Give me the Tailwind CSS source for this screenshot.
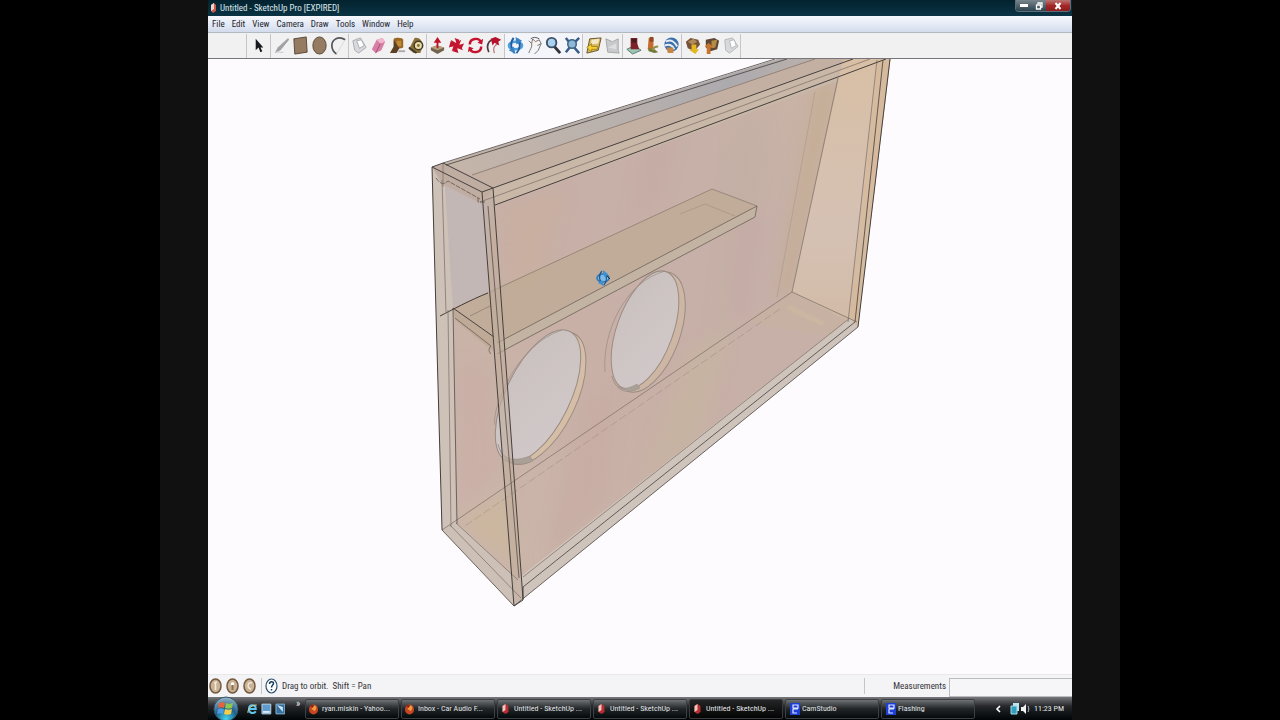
<!DOCTYPE html>
<html lang="en">
<head>
    <meta charset="UTF-8">
    <meta name="viewport" content="width=device-width, initial-scale=1.0">
    <title>Untitled - SketchUp Pro [EXPIRED]</title>
    <script src="https://cdn.jsdelivr.net/npm/@tailwindcss/browser@4"></script>
</head>
<body class="bg-black h-screen overflow-hidden flex justify-center font-['Roboto_Condensed','Roboto',sans-serif]">
    <div class="w-3/4 bg-[#111111] flex justify-center">
        <div class="w-[90%] flex flex-col bg-[#fdfbfd]">

            <!-- Title bar -->
            <header class="h-4 shrink-0 flex items-center bg-linear-to-b from-[#03222f] to-[#0b3444] pl-px pr-px text-[9px] leading-4 text-[#dfe8ec]">
                <svg class="w-2 h-3 mr-[3px]" viewBox="0 0 8 12"><path d="M2 3 5 1l2 2v6l-3 2-2-2z" fill="#c65a50"/><path d="M2 3 5 1v6L2 9z" fill="#f1d3c8"/></svg>
                <h1 class="grow">Untitled - SketchUp Pro [EXPIRED]</h1>
                <div class="flex self-start h-3 rounded-b-sm overflow-hidden border border-t-0 border-[#5f6e76]">
                    <button aria-label="Minimize" class="w-4 bg-linear-to-b from-[#7b878d] to-[#2c4450] flex items-center justify-center"><span class="w-2 h-[3px] bg-white"></span></button>
                    <button aria-label="Restore" class="w-[14px] bg-linear-to-b from-[#7b878d] to-[#2c4450] flex items-center justify-center">
                        <svg class="w-2 h-2" viewBox="0 0 8 8" fill="none" stroke="#fff" stroke-width="1.3"><path d="M3 2V1h4v4H6"/><path d="M1.500 3h4v4h-4z"/></svg>
                    </button>
                    <button aria-label="Close" class="w-6 bg-linear-to-b from-[#b97272] via-[#a42828] to-[#8c1c1c] flex items-center justify-center">
                        <svg class="w-2 h-2" viewBox="0 0 8 8" stroke="#fff" stroke-width="2"><path d="M1.500 1l5 6M6.500 1l-5 6"/></svg>
                    </button>
                </div>
            </header>

            <!-- Menu -->
            <nav class="h-[17px] shrink-0 flex items-center gap-[7px] px-1 bg-linear-to-b from-[#f7f9fe] to-[#d3dced] border-b border-[#b4b8c0] text-[9px] leading-4 text-[#22242c]">
                <button>File</button>
                <button>Edit</button>
                <button>View</button>
                <button>Camera</button>
                <button>Draw</button>
                <button>Tools</button>
                <button>Window</button>
                <button>Help</button>
            </nav>

            <!-- Toolbar -->
            <div class="h-[26px] shrink-0 flex items-center pl-[38px] bg-[#f2f1f2] border-b border-[#77777b]">
                <div class="flex border-l border-[#c6c6ca] pl-[3px] pr-px h-6 items-center">
                    <button aria-label="Select"><svg class="size-[19px]" viewBox="0 0 20 20"><path d="M6 3v12l3-3 2 5 2-1-2-4h3z" fill="#16181c"/></svg></button>
                </div>
                <div class="flex border-l border-[#c6c6ca] pl-px h-6 items-center">
                    <button aria-label="Line"><svg class="size-[19px]" viewBox="0 0 20 20"><path d="M17 2 6 12l-3 6 6-3L18 4z" fill="#a0a2a5"/><path d="M4 17c3-1 5 1 8 0" stroke="#c4c4c6" fill="none"/></svg></button>
                    <button aria-label="Rectangle"><svg class="size-[19px]" viewBox="0 0 20 20"><path d="M3 3 16 1l1 16-13 2z" fill="#957b61" stroke="#594637"/></svg></button>
                    <button aria-label="Circle"><svg class="size-[19px]" viewBox="0 0 20 20"><ellipse cx="10" cy="10" rx="7" ry="9" fill="#957b61" stroke="#594637"/></svg></button>
                    <button aria-label="Arc"><svg class="size-[19px]" viewBox="0 0 20 20" fill="none"><path d="M17 4C10-1 3 4 3 10c0 4 2 7 5 9" stroke="#55575b" stroke-width="1.800"/><path d="m17 4-9 15" stroke="#d4d4d6" stroke-width=".8"/></svg></button>
                </div>
                <div class="flex border-l border-[#c6c6ca] pl-px h-6 items-center">
                    <button aria-label="Make Component"><svg class="size-[19px]" viewBox="0 0 20 20" stroke="#a9abb0"><path d="m3 5 8-3 6 10-8 6-4-3z" fill="#d8d9dc"/><path d="m7 5 5-1 3 6-5 3z" fill="#fff"/></svg></button>
                    <button aria-label="Eraser"><svg class="size-[19px]" viewBox="0 0 20 20"><path d="m8 4 6-2 3 4-4 9-6 3-4-4z" fill="#d77ea5"/><path d="m8 4 4 4 5-2-3-4z" fill="#f1b7ce"/><path d="m12 8-5 10" stroke="#a94b73"/></svg></button>
                    <button aria-label="Paint Bucket"><svg class="size-[19px]" viewBox="0 0 20 20"><path d="M6 3c3-2 10-1 10 1v8c-3 2-8 1-10-1z" fill="#9a6723"/><path d="M9 5h5v6H9z" fill="#c08a35"/><path d="M6 4v7l-4 7h7l3-5" fill="#5b4024"/><path d="M11 15h7v2h-7z" fill="#aaa"/></svg></button>
                    <button aria-label="Tape Measure"><svg class="size-[19px]" viewBox="0 0 20 20"><path d="M8 2c5-1 8 3 9 8l-3 8H7L2 14z" fill="#8b7038"/><circle cx="12" cy="10" r="4.500" fill="#e8dca7" stroke="#453c27" stroke-width="1.600"/><path d="M2 12l8 6" stroke="#3f3a2c" stroke-width="2"/><circle cx="12" cy="10" r="1.500" fill="#8b7038"/></svg></button>
                </div>
                <div class="flex border-l border-[#c6c6ca] pl-px h-6 items-center">
                    <button aria-label="Push/Pull"><svg class="size-[19px]" viewBox="0 0 20 20"><path d="m3 12 6-2 8 2v3l-7 4-7-4z" fill="#72634f"/><path d="m3 12 6-2 8 2-7 3z" fill="#b7a17d"/><path d="m10 1 4 6h-3v6H9V7H6z" fill="#c0122c"/></svg></button>
                    <button aria-label="Move"><svg class="size-[19px]" viewBox="0 0 20 20" fill="#c5142d"><path d="m8 2 5 2-2 6zM18 8l-3 6-5-4zM12 18l-6-2 4-6zM2 12l2-7 6 5z"/><path d="m4 4 5 3 6-3-2 5 4 6-6-2-6 3 2-6z"/></svg></button>
                    <button aria-label="Rotate"><svg class="size-[19px]" viewBox="0 0 20 20" fill="none" stroke="#c5142d" stroke-width="2.600"><path d="M4 9c0-7 10-8 12-2M16 11c0 7-10 8-12 2"/><path d="m18 3-1 6-5-2zM2 17l1-6 5 2z" fill="#c5142d" stroke="none"/></svg></button>
                    <button aria-label="Offset"><svg class="size-[19px]" viewBox="0 0 20 20" fill="none"><path d="M4 17C0 8 6 1 14 4" stroke="#4b3a3e" stroke-width="1.800"/><path d="M10 18c-2-4-1-8 4-10" stroke="#b9808a" stroke-width="1.400"/><path d="m6 3 5-2 6 3-3 2 1 4-5-3-2 3z" fill="#b8112b"/></svg></button>
                </div>
                <div class="flex border-l border-[#c6c6ca] pl-px h-6 items-center bg-[#f3f5fa]">
                    <button aria-label="Orbit"><svg class="size-[19px]" viewBox="0 0 20 20" fill="none"><ellipse cx="10" cy="10" rx="7" ry="4" stroke="#4d9fdd" stroke-width="2.600"/><path d="M8 2c-4 5-3 12 1 16M12 3c4 4 3 11-1 15" stroke="#215d9d" stroke-width="2"/><path d="m10 1 7 4-6 4z" fill="#3684c6"/><path d="m10 19-7-4 5-4z" fill="#3684c6"/></svg></button>
                    <button aria-label="Pan"><svg class="size-[19px]" viewBox="0 0 20 20" fill="none" stroke="#77716e"><path d="M4 18c1-4 4-6 3-10L4 5M7 8l1-5 3 3 4-2 2 4-4 2M17 8l-3 7-4 4" fill="#f7f3ef"/><path d="M6 3c2-2 6-2 9 0" stroke="#555"/></svg></button>
                    <button aria-label="Zoom"><svg class="size-[19px]" viewBox="0 0 20 20"><path d="m10 10 7 8" stroke="#303237" stroke-width="3"/><circle cx="8" cy="7" r="5" fill="#a8d2ef" stroke="#3d5267" stroke-width="2"/></svg></button>
                    <button aria-label="Zoom Extents"><svg class="size-[19px]" viewBox="0 0 20 20"><path d="m3 2 4 5M17 2l-5 5M3 17l4-5M10 10l7 8" stroke="#385d88" stroke-width="2.600"/><circle cx="9.500" cy="8.500" r="4.500" fill="#8fb8d6" stroke="#3d6487" stroke-width="1.600"/></svg></button>
                </div>
                <div class="flex border-l border-[#c6c6ca] pl-px h-6 items-center">
                    <button aria-label="Previous View"><svg class="size-[19px]" viewBox="0 0 20 20"><path d="m6 3 12-1-3 13-12 3z" fill="#d9b95c" stroke="#66532c"/><path d="m8 4 8-1-1 5-8 1z" fill="#f2e8c8"/><path d="m3 12 5-4v3h6v3H8v3z" fill="#f4d22e" stroke="#8c6617" stroke-width=".7"/></svg></button>
                    <button aria-label="Next View"><svg class="size-[19px]" viewBox="0 0 20 20"><path d="m3 3 7 3 6-3v12l1 3-12-1z" fill="#c9cacc" stroke="#a5a6a9"/><path d="m5 12 9-4v6z" fill="#dedfe1"/></svg></button>
                </div>
                <div class="flex border-l border-[#c6c6ca] pl-px h-6 items-center">
                    <button aria-label="Position Camera"><svg class="size-[19px]" viewBox="0 0 20 20"><path d="m3 14 8-4 7 5-9 4z" fill="#9fc4b4" stroke="#597c72"/><path d="M7 2h7v6l2 6H7V8z" fill="#7b222b"/><path d="M8 3h5v4H8z" fill="#4a1b20"/></svg></button>
                    <button aria-label="Walk"><svg class="size-[19px]" viewBox="0 0 20 20"><path d="M6 2h5v12H5z" fill="#c76a2e"/><path d="M7 1h4v5H7z" fill="#8e4b23"/><path d="m5 13 7 1 4 3-4 1-6-2z" fill="#727b35"/><path d="M10 15c1-3 3-4 6-4" stroke="#8b9446" fill="none" stroke-width="2"/></svg></button>
                    <button aria-label="Look Around"><svg class="size-[19px]" viewBox="0 0 20 20"><circle cx="10" cy="9" r="7.500" fill="#3d6ea8"/><path d="M4 6c6-3 9 0 12 5M3 10c5-2 8 0 10 4" stroke="#e5edf7" stroke-width="2" fill="none"/><path d="M5 12h7v6H6z" fill="#c98746"/></svg></button>
                </div>
                <div class="flex border-l border-[#c6c6ca] pl-px h-6 items-center">
                    <button aria-label="Get Models"><svg class="size-[19px]" viewBox="0 0 20 20"><path d="m3 6 5-4 8 2 2 5-6 7-7-3z" fill="#765238"/><path d="m5 6 6-3 4 3-5 3z" fill="#b08b59"/><path d="M9 9h5v5h3l-4 5-6-4 2-1z" fill="#e4b823"/></svg></button>
                    <button aria-label="Share Model"><svg class="size-[19px]" viewBox="0 0 20 20"><path d="m4 4 9-2 5 3-2 9-7 2-5-4z" fill="#5e4633"/><path d="m10 5 6-1-2 8-4 1z" fill="#b58c44"/><path d="m3 11 4-4 5 5H9v7H5v-7z" fill="#c9752c"/></svg></button>
                    <button aria-label="Share Component"><svg class="size-[19px]" viewBox="0 0 20 20" stroke="#b4b6ba"><path d="m4 4 8-2 6 9-9 7-4-3z" fill="#d8d9db"/><path d="m9 5 5-1 2 6-5 3z" fill="#fff"/></svg></button>
                </div>
                <div class="border-l border-[#c6c6ca] h-6"></div>
            </div>

            <!-- Drawing area -->
            <main class="grow min-h-0">
                <svg class="w-full h-full" viewBox="208 59 864 615" preserveAspectRatio="xMidYMin slice" fill="none" role="img" aria-label="Box model with two round cutouts">
                    <defs>
                        <linearGradient id="back" x1="0" y1="1" x2="1" y2="0">
                            <stop offset="0" stop-color="#ccb7ab"/><stop offset=".4" stop-color="#c8b0a7"/><stop offset=".7" stop-color="#c6b0a8"/><stop offset="1" stop-color="#cbb5a4"/>
                        </linearGradient>
                        <linearGradient id="side" x1="0" y1="0" x2="0" y2="1">
                            <stop offset="0" stop-color="#d8bfa5"/><stop offset=".65" stop-color="#d5c1b4"/><stop offset="1" stop-color="#d2bba6"/>
                        </linearGradient>
                        <linearGradient id="top" x1="0" y1="0" x2="1" y2="0">
                            <stop offset="0" stop-color="#c6b5a8"/><stop offset=".4" stop-color="#bbb2ad"/><stop offset=".75" stop-color="#adaaae"/><stop offset="1" stop-color="#bbb1ab"/>
                        </linearGradient>
                        <linearGradient id="hole" x1="0" y1="0" x2="1" y2="1">
                            <stop offset="0" stop-color="#c9c1be"/><stop offset="1" stop-color="#d2c8ca"/>
                        </linearGradient>
                        <filter id="soft"><feGaussianBlur stdDeviation="7"/></filter>
                        <clipPath id="body"><path d="M432 167 790 55H891L858 327 514 606 442 530z"/></clipPath>
                    </defs>

                    <path d="M432 167 790 55H891L858 327 514 606 442 530z" fill="url(#back)"/>
                    <!-- wood grain -->
                    <g clip-path="url(#body)">
                        <g filter="url(#soft)">
                            <path d="M735 130l30-14-20 180-30 50z" fill="#c0b0a2" opacity=".45"/>
                            <path d="M690 350l40-20-30 110-60 40z" fill="#c6b59f" opacity=".6"/>
                            <path d="M505 210l60-20-25 90-30 10z" fill="#c9b09a" opacity=".45"/>
                            <path d="M585 400l30-10-10 110-60 60z" fill="#c6aaa2" opacity=".6"/>
                            <path d="M460 360l30 20 10 90-40 40z" fill="#c9aea5" opacity=".6"/>
                            <path d="M460 520l50-30 10 80z" fill="#cbb79a" opacity=".6"/>
                            <path d="M650 130l30-10-20 80-30 20z" fill="#c6aaa2" opacity=".5"/>
                            <path d="M740 220l25-10-15 100-20 10z" fill="#c5aaa6" opacity=".6"/>
                            <path d="M815 90l23-12-46 214-15 5z" fill="#c4ac92" opacity=".8"/>
                        </g>
                        <!-- top board -->
                        <path d="M432 167 790 55h38L472 175l-29-12z" fill="url(#top)"/>
                        <path d="M472 175 825 55h40L493 188z" fill="#c4b0a3"/>
                        <path d="M493 188 862 55h29l-4 8L495 205z" fill="#c9b7a8"/>
                        <!-- right side board -->
                        <path d="M843 60 891 55 858 327 792 292z" fill="url(#side)"/>
                        <path d="M878 62 890 59 858 325 849 321z" fill="#d4b898" opacity=".7"/>
                        <path d="M792 292 857 322 840 338 745 322z" fill="#c6b2a0" opacity=".6"/>
                        <path d="M788 307l35 17" stroke="#d0bba0" stroke-width="5" opacity=".5"/>
                        <!-- left side board -->
                        <path d="M443 163 493 188 488 296 445 312z" fill="#c3b7b6"/>
                        <path d="M432 167 444 172 453 310 456 523 442 530z" fill="#cdc1b8"/>
                        <path d="M432 167 443 163 493 188 482 204 442 184z" fill="#c0ada1"/>
                        <!-- bottom board -->
                        <path d="M442 530 456 522 516 578 514 606z" fill="#cdc0b6"/>
                        <path d="M516 580 850 318 858 327 514 606z" fill="#cfc4bb"/>
                    </g>

                    <!-- round cutouts -->
                    <g stroke="#9b8b82">
                        <ellipse cx="542" cy="398" rx="34" ry="72" transform="rotate(26 542 398)" fill="#d4bea6"/>
                        <ellipse cx="538" cy="396" rx="32" ry="72" transform="rotate(26 538 396)" fill="url(#hole)"/>
                        <ellipse cx="649" cy="332" rx="31" ry="63" transform="rotate(20 649 332)" fill="#cdb7a4"/>
                        <ellipse cx="645" cy="330" rx="28" ry="62" transform="rotate(20 645 330)" fill="url(#hole)"/>
                        <path d="M498 444c4 16 16 18 32 12l3 5c-14 6-30 4-35-17z" fill="#a9a098" stroke-width=".5"/>
                        <path d="M612 376c3 14 13 15 25 8l3 4c-12 7-24 4-28-12z" fill="#a9a098" stroke-width=".5"/>
                        <path d="M495 425c-4-14 20-80 67-95M605 372c-3-40 20-90 60-101" stroke-width=".7"/>
                    </g>

                    <!-- shelf -->
                    <path d="M453 308 712 189 757 206 497 343z" fill="#c0ac97" opacity=".85"/>
                    <path d="M497 343 757 206v10L497 354z" fill="#c3b3a3"/>
                    <path d="M453 308 494 337v15L455 320z" fill="#bfaa97"/>
                    <g stroke="#8f7e72" stroke-width=".8">
                        <path d="M490 292 712 189 757 206"/>
                        <path d="M680 214 705 204 735 216" opacity=".5"/>
                        <path d="M470 316 490 306"/>
                        <path d="M497 343 757 206" stroke="#6d6159"/>
                        <path d="M497 354 755 217 757 206" stroke="#6d6159"/>
                    </g>
                    <path d="M440 316c12-6 30-16 48-23" stroke="#443c38"/>
                    <path d="M453 308 494 337" stroke="#4c4340"/>
                    <path d="M455 318l36 28c-3 3-2 6 0 8" stroke="#6a5e57" stroke-width=".8"/>

                    <!-- front left stile -->
                    <path d="M482 192 493 188 523 599 514 606z" fill="#c2ad9c" opacity=".6"/>

                    <!-- hidden edges -->
                    <g stroke="#85766d" stroke-width=".8">
                        <path d="M472 175 815 59"/>
                        <path d="M443 163v24M480 202 870 59"/>
                        <path d="M838 78 792 292 857 322"/>
                        <path d="M815 92 777 297" opacity=".3"/>
                        <path d="M792 292 442 530"/>
                        <path d="M780 309 465 526" stroke-dasharray="8 3" opacity=".4"/>
                        <path d="M523 577 850 318"/>
                        <path d="M456 523 518 580M450 525 521 598"/>
                        <path d="M448 310 451 527M442 180 446 312"/>
                        <path d="M877 60 848 322"/>
                    </g>
                    <path d="M436 178c6 8 8 6 12 3l32 18M478 198v4h7" stroke="#75675f" stroke-dasharray="5 1"/>

                    <!-- visible edges -->
                    <g stroke="#45403d" stroke-width="1">
                        <path d="M443 163 775 59M446 165 787 59" stroke-width=".8"/>
                        <path d="M432 167 443 163 493 188 482 192z"/>
                        <path d="M493 188 853 59"/>
                        <path d="M495 205 886 59"/>
                        <path d="M432 167 442 530"/>
                        <path d="M442 530 514 606 858 327" stroke="#6b6561"/>
                        <path d="M858 327 890 59"/>
                        <path d="M883 60 855 322 523 587" stroke-width=".8"/>
                        <path d="M482 192 514 606M493 188 523 599"/>
                        <path d="M488 206 519 578" stroke-width=".7"/>
                        <path d="M453 308 457 524" stroke-width=".7"/>
                        <path d="M523 587v13l-9 6"/>
                    </g>

                    <!-- orbit cursor -->
                    <g transform="translate(603 278)">
                        <ellipse rx="6" ry="4" fill="#7dbbe8" stroke="#2e75b5" stroke-width="1.500"/>
                        <path d="M-1-7c-4 4-3 10 1 14M1-6c3 4 3 9 0 13" stroke="#24588f" stroke-width="1.300"/>
                        <path d="m0-8 5 4-4 3zM1 8l-6-3 4-3z" fill="#3c92d6"/>
                        <path d="M4-2l3 3" stroke="#26343f"/>
                    </g>
                </svg>
            </main>

            <!-- Status bar -->
            <footer class="h-[23px] shrink-0 flex items-center bg-[#f4f3f5] border-t border-[#e8e7ea] pl-px text-[9px] leading-4 text-[#33343a]">
                <div class="flex gap-1">
                    <svg class="w-[13px] h-4" viewBox="0 0 13 16"><ellipse cx="6.500" cy="8" rx="5.500" ry="7" fill="#c9b397" stroke="#74583f" stroke-width="1.500"/><path d="M6.500 4v8M5 5l3-1" stroke="#f1e9dc" stroke-width="1.500"/></svg>
                    <svg class="w-[13px] h-4" viewBox="0 0 13 16"><ellipse cx="6.500" cy="8" rx="5.500" ry="7" fill="#c9b397" stroke="#74583f" stroke-width="1.500"/><circle cx="6.500" cy="6" r="1.800" fill="#fff"/><path d="M6.500 7v5" stroke="#8b7050" stroke-width="2"/></svg>
                    <svg class="w-[13px] h-4" viewBox="0 0 13 16"><ellipse cx="6.500" cy="8" rx="5.500" ry="7" fill="#c9b397" stroke="#74583f" stroke-width="1.500"/><path d="M9 5c-4-2-6 5-1 6" stroke="#f1e9dc" stroke-width="1.500" fill="none"/></svg>
                </div>
                <div class="h-4 border-l border-[#c5c5c9] ml-[5px] mr-[3px]"></div>
                <svg class="w-[13px] h-4" viewBox="0 0 13 16"><ellipse cx="6.500" cy="8" rx="5.500" ry="7" fill="#fff" stroke="#2c4f6b" stroke-width="1.200"/><path d="M4.500 6c0-3 4-3 4-.5C8.500 7 6.500 7 6.500 9.500M6.500 11v1.500" stroke="#173c5c" stroke-width="1.500" fill="none"/></svg>
                <p class="ml-1 grow whitespace-pre">Drag to orbit.  Shift = Pan</p>
                <div class="h-4 border-l border-[#c5c5c9] mr-7"></div>
                <label for="measurements">Measurements</label>
                <input id="measurements" type="text" class="w-[123px] h-[19px] ml-[3px] bg-[#f6f5f7] border border-r-0 border-[#bcbcc0] self-end">
            </footer>

            <!-- Taskbar -->
            <div class="h-[23px] shrink-0 flex items-center bg-linear-to-b from-[#77797c] via-[#26282b] via-40% to-[#020506] text-[8px] leading-4 text-[#e3e6e8] relative">
                <button aria-label="Start" class="ml-[5px] w-[26px] h-[26px] shrink-0">
                    <svg class="size-[26px]" viewBox="0 0 26 26">
                        <defs><radialGradient id="orb" cx=".5" cy=".9" r=".9"><stop offset="0" stop-color="#43d2ec"/><stop offset=".5" stop-color="#1d5f8d"/><stop offset="1" stop-color="#9db9c9"/></radialGradient></defs>
                        <circle cx="13" cy="13" r="12" fill="url(#orb)" stroke="#345468"/>
                        <path d="M6 7c2-1 4-1 6 0l-1 5c-2-1-4-1-6 0z" fill="#e8623a"/>
                        <path d="M13 7c2 1 4 1 7 0l-1 5c-3 1-5 1-7 0z" fill="#8cc653"/>
                        <path d="M5 13c2-1 4-1 6 0l-1 5c-2-1-4-1-6 0z" fill="#4d9de0"/>
                        <path d="M12 13c2 1 4 1 7 0l-1 5c-3 1-5 1-7 0z" fill="#f6cb45"/>
                    </svg>
                </button>
                <div class="flex items-center gap-[3px] ml-2 w-[57px] shrink-0">
                    <svg class="w-[11px] h-3" viewBox="0 0 11 12" fill="none"><path d="M2 6h7c0-5-7-5-7 0 0 5 5 5 7 2.500" stroke="#5fc5ec" stroke-width="2"/><path d="M1 10C0 6 6 1 10 2" stroke="#d8d08a"/></svg>
                    <svg class="w-[11px] h-3" viewBox="0 0 11 12"><path d="M1 1h9v10H1z" fill="#5f9bcc" stroke="#bdd6e8"/><path d="M2 8h7v2H2z" fill="#d9e8f2"/></svg>
                    <svg class="w-[11px] h-3" viewBox="0 0 11 12"><path d="M1 1h9v10H1z" fill="#356f9f" stroke="#8cb5d3"/><path d="m2 2 6 2v5z" fill="#d3e6f4"/></svg>
                    <button aria-label="More" class="self-start text-[10px] leading-none -mt-1 ml-1 w-3">»</button>
                </div>
                <div class="grow min-w-0 grid grid-cols-7 gap-[2px] ml-px">
                    <button class="min-w-0 h-5 flex items-center gap-[3px] pl-[2px] rounded-xs border border-[#3d4043] bg-linear-to-b from-[#707376] via-[#212528] to-[#050a0c] whitespace-nowrap">
                        <svg class="w-[11px] h-3 shrink-0" viewBox="0 0 10 12"><ellipse cx="5" cy="6.500" rx="4.500" ry="5" fill="#c94420"/><path d="M5 2c3 0 4 4 1 6L3 6z" fill="#ef9a45"/><path d="M1 2l3 3 2-3" fill="#8d2617"/></svg>
                        <span>ryan.miskin - Yahoo...</span>
                    </button>
                    <button class="min-w-0 h-5 flex items-center gap-[3px] pl-[2px] rounded-xs border border-[#3d4043] bg-linear-to-b from-[#707376] via-[#212528] to-[#050a0c] whitespace-nowrap">
                        <svg class="w-[11px] h-3 shrink-0" viewBox="0 0 10 12"><ellipse cx="5" cy="6.500" rx="4.500" ry="5" fill="#c94420"/><path d="M5 2c3 0 4 4 1 6L3 6z" fill="#ef9a45"/><path d="M1 2l3 3 2-3" fill="#8d2617"/></svg>
                        <span>Inbox - Car Audio F...</span>
                    </button>
                    <button class="min-w-0 h-5 flex items-center gap-[3px] pl-[2px] rounded-xs border border-[#3d4043] bg-linear-to-b from-[#707376] via-[#212528] to-[#050a0c] whitespace-nowrap">
                        <svg class="w-[11px] h-3 shrink-0" viewBox="0 0 10 12"><path d="M2 3 5 1l3 2v6l-3 2-3-2z" fill="#b92c31"/><path d="M2 3 5 1v6L2 9z" fill="#eec7c1"/></svg>
                        <span>Untitled - SketchUp ...</span>
                    </button>
                    <button class="min-w-0 h-5 flex items-center gap-[3px] pl-[2px] rounded-xs border border-[#3d4043] bg-linear-to-b from-[#707376] via-[#212528] to-[#050a0c] whitespace-nowrap">
                        <svg class="w-[11px] h-3 shrink-0" viewBox="0 0 10 12"><path d="M2 3 5 1l3 2v6l-3 2-3-2z" fill="#b92c31"/><path d="M2 3 5 1v6L2 9z" fill="#eec7c1"/></svg>
                        <span>Untitled - SketchUp ...</span>
                    </button>
                    <button class="min-w-0 h-5 flex items-center gap-[3px] pl-[2px] rounded-xs border border-[#3b3b3d] bg-linear-to-b from-[#242526] to-[#050505] whitespace-nowrap">
                        <svg class="w-[11px] h-3 shrink-0" viewBox="0 0 10 12"><path d="M2 3 5 1l3 2v6l-3 2-3-2z" fill="#b92c31"/><path d="M2 3 5 1v6L2 9z" fill="#eec7c1"/></svg>
                        <span>Untitled - SketchUp ...</span>
                    </button>
                    <button class="min-w-0 h-5 flex items-center gap-[2px] pl-1 rounded-xs border border-[#3d4043] bg-linear-to-b from-[#707376] via-[#212528] to-[#050a0c] whitespace-nowrap">
                        <svg class="w-[10px] h-3 shrink-0" viewBox="0 0 10 12"><path d="M0 0h10v12H0z" fill="#1d3fd4"/><path d="M3 2h5v3H3zM3 6h5M3 6v4h4" fill="none" stroke="#dfe6ff" stroke-width="1.200"/></svg>
                        <span>CamStudio</span>
                    </button>
                    <button class="min-w-0 h-5 flex items-center gap-[2px] pl-1 rounded-xs border border-[#3d4043] bg-linear-to-b from-[#707376] via-[#212528] to-[#050a0c] whitespace-nowrap">
                        <svg class="w-[10px] h-3 shrink-0" viewBox="0 0 10 12"><path d="M0 0h10v12H0z" fill="#1d3fd4"/><path d="M3 2h5v3H3zM3 6h5M3 6v4h4" fill="none" stroke="#dfe6ff" stroke-width="1.200"/></svg>
                        <span>Flashing</span>
                    </button>
                </div>
                <div class="w-[97px] shrink-0 flex items-center justify-end pr-2">
                    <svg class="w-[6px] h-2 mr-[9px]" viewBox="0 0 6 8"><path d="M5 1 2 4l3 3" fill="none" stroke="#fff" stroke-width="1.600"/></svg>
                    <svg class="w-[10px] h-3" viewBox="0 0 10 12"><path d="M3 0h6v8H3z" fill="#bfe4ee"/><path d="M1 3h6v8H1z" fill="#2f9fbd" stroke="#a8dbe6"/></svg>
                    <svg class="w-[10px] h-3 mr-1" viewBox="0 0 10 12"><path d="M1 4h2l3-3v10L3 8H1z" fill="#f0f2f3"/><path d="M8 3c1 2 1 4 0 6" stroke="#bcc2c5" fill="none"/></svg>
                    <time>11:23 PM</time>
                </div>
            </div>
        </div>
    </div>
</body>
</html>
